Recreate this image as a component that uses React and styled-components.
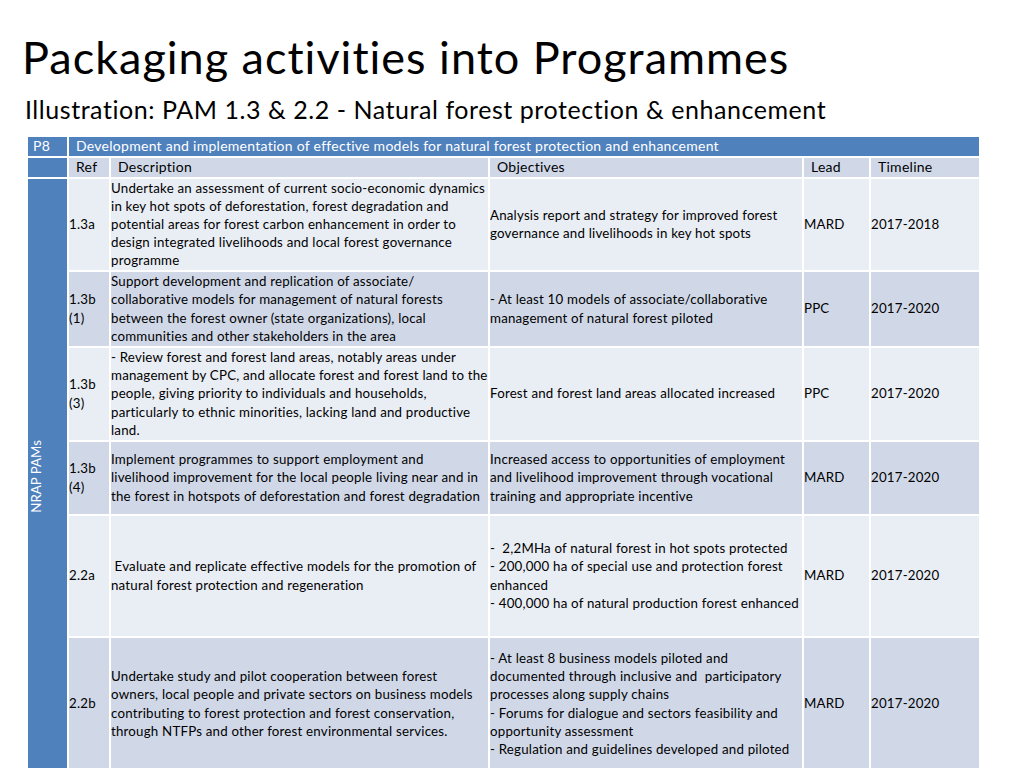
import React from 'react';
import styled, {createGlobalStyle} from 'styled-components';

const GlobalStyle = createGlobalStyle`
    html, body {
        margin: 0;
        padding: 0;
        background: #ffffff;
        overflow: hidden;
    }
    body {
        font-family: Lato, "Open Sans", sans-serif;
        color: #000000;
    }
`;

const Slide = styled.div`
    width: 1024px;
    height: 768px;
    overflow: hidden;
    padding-top: 30px;
    box-sizing: border-box;
`;
const Title = styled.h1`
    margin: 0 0 0 22px;
    font-size: 45px;
    line-height: 54px;
    letter-spacing: 1px;
    font-weight: 400;
    white-space: nowrap;
`;
const Subtitle = styled.h2`
    margin: 10px 0 0 25px;
    font-size: 25px;
    line-height: 30px;
    letter-spacing: 0.55px;
    font-weight: 400;
    white-space: nowrap;
`;
const Table = styled.table`
    margin: 10.5px 0 0 26px;
    width: 953px;
    table-layout: fixed;
    border-collapse: collapse;
    font-size: 13.3px;
    letter-spacing: 0.2px;
    line-height: 18.2px;
`;
const Row = styled.tr`
    height: ${props => props.height}px;
    background: ${props => props.shade === 'dark' ? '#d0d8e8' : '#e9edf4'};
`;
const BandRow = styled.tr`
    height: 21px;
    background: #4f81bd;
    color: #ffffff;
    font-size: 14px;
    letter-spacing: 0.27px;
`;
const HeadRow = styled.tr`
    height: 21px;
    background: #d0d8e8;
    font-size: 14px;
    letter-spacing: 0.27px;
`;
const Cell = styled.td`
    border: 2px solid #ffffff;
    padding: 0;
    vertical-align: middle;
    white-space: pre;
    overflow: hidden;
`;
const HeadCell = styled(Cell)`
    padding: 0 ${props => props.pad || 7}px;
    background: ${props => props.blue ? '#4f81bd' : 'transparent'};
`;
const SideCell = styled.td`
    border: 2px solid #ffffff;
    background: #4f81bd;
    color: #ffffff;
    padding: 8px 0 0 0;
    vertical-align: middle;
    text-align: left;
    font-size: 13.3px;
    letter-spacing: 0;
`;
const SideLabel = styled.span`
    display: inline-block;
    writing-mode: vertical-rl;
    transform: rotate(180deg);
    white-space: nowrap;
    margin-left: -1px;
`;
const Line = styled.div`
    white-space: pre;
`;

const rows = [
    {
        ref: ['1.3a'],
        height: 92,
        shade: 'light',
        desc: [
            'Undertake an assessment of current socio-economic dynamics',
            'in key hot spots of deforestation, forest degradation and',
            'potential areas for forest carbon enhancement in order to',
            'design integrated livelihoods and local forest governance',
            'programme',
        ],
        obj: [
            'Analysis report and strategy for improved forest',
            'governance and livelihoods in key hot spots',
        ],
        lead: 'MARD',
        time: '2017-2018',
    },
    {
        ref: ['1.3b', '(1)'],
        height: 76,
        shade: 'dark',
        desc: [
            'Support development and replication of associate/',
            'collaborative models for management of natural forests',
            'between the forest owner (state organizations), local',
            'communities and other stakeholders in the area',
        ],
        obj: [
            '- At least 10 models of associate/collaborative',
            'management of natural forest piloted',
        ],
        lead: 'PPC',
        time: '2017-2020',
    },
    {
        ref: ['1.3b', '(3)'],
        height: 94,
        shade: 'light',
        desc: [
            '- Review forest and forest land areas, notably areas under',
            'management by CPC, and allocate forest and forest land to the',
            'people, giving priority to individuals and households,',
            'particularly to ethnic minorities, lacking land and productive',
            'land.',
        ],
        obj: ['Forest and forest land areas allocated increased'],
        lead: 'PPC',
        time: '2017-2020',
    },
    {
        ref: ['1.3b', '(4)'],
        height: 74,
        shade: 'dark',
        desc: [
            'Implement programmes to support employment and',
            'livelihood improvement for the local people living near and in',
            'the forest in hotspots of deforestation and forest degradation',
        ],
        obj: [
            'Increased access to opportunities of employment',
            'and livelihood improvement through vocational',
            'training and appropriate incentive',
        ],
        lead: 'MARD',
        time: '2017-2020',
    },
    {
        ref: ['2.2a'],
        height: 122,
        shade: 'light',
        desc: [
            ' Evaluate and replicate effective models for the promotion of',
            'natural forest protection and regeneration',
        ],
        obj: [
            '-  2,2MHa of natural forest in hot spots protected',
            '- 200,000 ha of special use and protection forest',
            'enhanced',
            '- 400,000 ha of natural production forest enhanced',
        ],
        lead: 'MARD',
        time: '2017-2020',
    },
    {
        ref: ['2.2b'],
        height: 134,
        shade: 'dark',
        desc: [
            'Undertake study and pilot cooperation between forest',
            'owners, local people and private sectors on business models',
            'contributing to forest protection and forest conservation,',
            'through NTFPs and other forest environmental services.',
        ],
        obj: [
            '- At least 8 business models piloted and',
            'documented through inclusive and  participatory',
            'processes along supply chains',
            '- Forums for dialogue and sectors feasibility and',
            'opportunity assessment',
            '- Regulation and guidelines developed and piloted',
        ],
        lead: 'MARD',
        time: '2017-2020',
    },
];

const Lines = ({items}) => items.map((text, i) => <Line key={i}>{text}</Line>);

const App = () => {
    return (
        <Slide>
            <GlobalStyle />
            <Title>Packaging activities into Programmes</Title>
            <Subtitle>Illustration: PAM 1.3 &amp; 2.2 - Natural forest protection &amp; enhancement</Subtitle>
            <Table>
                <colgroup>
                    <col style={{width: 41}} />
                    <col style={{width: 42}} />
                    <col style={{width: 379}} />
                    <col style={{width: 314}} />
                    <col style={{width: 67}} />
                    <col style={{width: 110}} />
                </colgroup>
                <tbody>
                    <BandRow>
                        <HeadCell pad={5}>P8</HeadCell>
                        <HeadCell colSpan={5}>Development and implementation of effective models for natural forest protection and enhancement</HeadCell>
                    </BandRow>
                    <HeadRow>
                        <HeadCell blue />
                        <HeadCell>Ref</HeadCell>
                        <HeadCell>Description</HeadCell>
                        <HeadCell>Objectives</HeadCell>
                        <HeadCell>Lead</HeadCell>
                        <HeadCell>Timeline</HeadCell>
                    </HeadRow>
                    {rows.map((row, i) => (
                        <Row key={i} height={row.height} shade={row.shade}>
                            {i === 0 && (
                                <SideCell rowSpan={rows.length}>
                                    <SideLabel>NRAP PAMs</SideLabel>
                                </SideCell>
                            )}
                            <Cell><Lines items={row.ref} /></Cell>
                            <Cell><Lines items={row.desc} /></Cell>
                            <Cell><Lines items={row.obj} /></Cell>
                            <Cell>{row.lead}</Cell>
                            <Cell>{row.time}</Cell>
                        </Row>
                    ))}
                </tbody>
            </Table>
        </Slide>
    );
};

export default App;
